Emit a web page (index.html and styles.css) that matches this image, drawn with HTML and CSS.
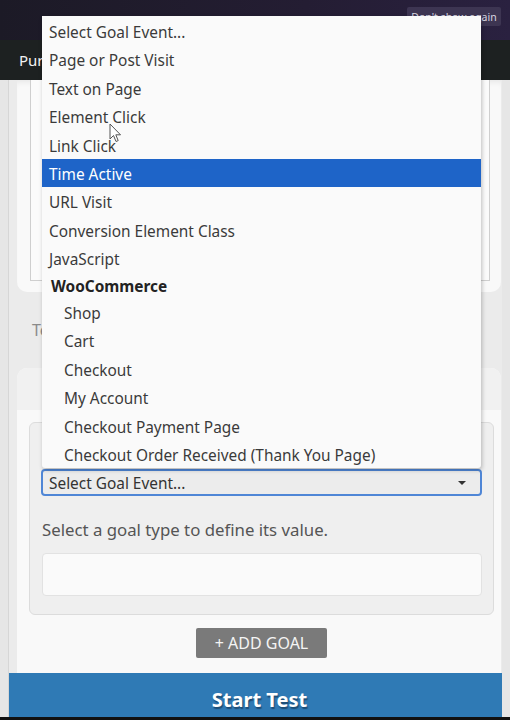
FILE: index.html
```html
<!DOCTYPE html>
<html>
<head>
<meta charset="utf-8">
<link rel="stylesheet" href="styles.css">
</head>
<body>
<div class="topbar"><button class="dismiss">Don't show again</button></div>
<div class="navbar"><span class="navtext">Pur</span></div>
<div class="page">
  <div class="main">
    <div class="card card-top">
      <div class="textbox"></div>
    </div>
    <div class="section-label">Te</div>
    <div class="card card-goals">
      <div class="card-head"></div>
      <div class="card-body">
        <div class="goal-panel">
          <div class="goal-label"></div>
          <div class="select-box"><span>Select Goal Event...</span><span class="caret"></span></div>
          <div class="hint">Select a goal type to define its value.</div>
          <div class="value-box"></div>
        </div>
        <div class="add-row"><button class="add-goal">+ ADD GOAL</button></div>
      </div>
    </div>
  </div>
  <div class="start-bar">Start Test</div>
</div>
<div class="bottom-edge"></div>

<ul class="dropdown">
  <li class="opt">Select Goal Event...</li>
  <li class="opt">Page or Post Visit</li>
  <li class="opt">Text on Page</li>
  <li class="opt">Element Click</li>
  <li class="opt">Link Click</li>
  <li class="opt selected">Time Active</li>
  <li class="opt">URL Visit</li>
  <li class="opt">Conversion Element Class</li>
  <li class="opt">JavaScript</li>
  <li class="group">WooCommerce</li>
  <li class="opt sub">Shop</li>
  <li class="opt sub">Cart</li>
  <li class="opt sub">Checkout</li>
  <li class="opt sub">My Account</li>
  <li class="opt sub">Checkout Payment Page</li>
  <li class="opt sub">Checkout Order Received (Thank You Page)</li>
</ul>

<svg class="cursor" width="13" height="20" viewBox="0 0 13 20">
  <path d="M1 1 L1 16 L4.5 12.5 L7 18.5 L9.2 17.6 L6.8 11.8 L11.5 11.8 Z" fill="#ffffff" stroke="#555" stroke-width="1"/>
</svg>
</body>
</html>
```
FILE: styles.css
```css
html, body {
  margin: 0;
  padding: 0;
}
body {
  width: 510px;
  height: 720px;
  overflow: hidden;
  background: #e6e6e6;
  font-family: "Noto Sans", "Open Sans", sans-serif;
  position: relative;
}
.topbar {
  height: 40px;
  background: linear-gradient(90deg, #1c1a26, #241d33 60%, #2a2140);
  display: flex;
  justify-content: flex-end;
  align-items: flex-start;
  padding: 7px 9px 0 0;
  box-sizing: border-box;
}
.dismiss {
  height: 19px;
  width: 94px;
  border: none;
  border-radius: 2px;
  background: #3d3552;
  color: #d8d6e0;
  font-family: "Noto Sans", sans-serif;
  font-size: 10.5px;
  padding: 0;
}
.navbar {
  height: 40px;
  background: #1d2121;
  display: flex;
  align-items: center;
  padding-left: 19px;
  box-sizing: border-box;
}
.navtext {
  color: #f2f2f2;
  font-size: 15px;
}
.page {
  margin: 0 8px;
  border-left: 1px solid #d6d6d6;
  height: 637px;
  display: flex;
  flex-direction: column;
  box-sizing: border-box;
}
.main {
  flex: 1;
  background: #ebebeb;
  padding: 0 1px 0 8px;
  display: flex;
  flex-direction: column;
}
.card {
  background: #f9f9f9;
}
.card-top {
  height: 212px;
  border-radius: 0 0 10px 10px;
  padding: 0 11px 11px 13px;
  box-sizing: border-box;
  box-shadow: inset 0 6px 6px -4px rgba(0,0,0,0.08);
}
.textbox {
  height: 201px;
  border: 1px solid #cfcfcf;
  border-top: none;
  background: #fbfbfb;
  box-sizing: border-box;
}
.section-label {
  height: 76px;
  display: flex;
  align-items: center;
  padding-left: 15px;
  color: #8a8a8a;
  font-size: 16px;
}
.card-goals {
  flex: 1;
  border-radius: 10px 10px 0 0;
  display: flex;
  flex-direction: column;
}
.card-head {
  height: 42px;
  background: #f1f1f1;
  border-radius: 10px 10px 0 0;
}
.card-body {
  flex: 1;
  padding: 12px 7px 0 12px;
}
.goal-panel {
  background: #efefef;
  border: 1px solid #dcdcdc;
  border-radius: 6px;
  height: 193px;
  box-sizing: border-box;
  padding: 0 11px 0 11px;
}
.goal-label {
  height: 46px;
}
.select-box {
  height: 27px;
  border: 2px solid #4f86d6;
  border-radius: 4px;
  background: #ececec;
  box-sizing: border-box;
  display: flex;
  align-items: center;
  justify-content: space-between;
  padding: 1px 14px 0 6px;
  color: #333;
  font-size: 15.4px;
}
.caret {
  width: 0;
  height: 0;
  border-left: 4px solid transparent;
  border-right: 4px solid transparent;
  border-top: 4px solid #333;
}
.hint {
  height: 57px;
  box-sizing: border-box;
  padding: 9px 0 0 1px;
  display: flex;
  align-items: center;
  color: #555;
  font-size: 16.8px;
}
.value-box {
  height: 43px;
  margin-left: 1px;
  background: #fafafa;
  border: 1px solid #e2e2e2;
  border-radius: 4px;
  box-sizing: border-box;
}
.add-row {
  display: flex;
  justify-content: center;
  padding: 13px 0 0 0;
}
.add-goal {
  width: 131px;
  height: 30px;
  border: none;
  border-radius: 2px;
  background: #7a7a7a;
  color: #f4f4f4;
  font-family: "Noto Sans", sans-serif;
  font-size: 16px;
  padding: 0;
}
.start-bar {
  height: 44px;
  box-sizing: border-box;
  padding: 8px 0 0 8px;
  background: #2f7ab5;
  color: #ffffff;
  font-weight: bold;
  font-size: 20px;
  display: flex;
  align-items: center;
  justify-content: center;
  text-shadow: 1px 2px 1px #1d4d75;
}
.bottom-edge {
  height: 3px;
  background: #111;
}
.dropdown {
  position: absolute;
  left: 42px;
  top: 16px;
  width: 439px;
  margin: 0;
  padding: 1px 0 0 0;
  list-style: none;
  background: #fafafa;
  box-shadow: 1px 2px 4px rgba(0,0,0,0.25);
  border-radius: 0 0 3px 3px;
  font-size: 15.4px;
  color: #3a3a3a;
}
.opt {
  height: 28.4px;
  box-sizing: border-box;
  padding-top: 3px;
  line-height: 25.4px;
  padding-left: 7px;
  white-space: nowrap;
}
.opt.sub {
  padding-left: 22px;
}
.opt.selected {
  background: #1e64c8;
  color: #ffffff;
}
.group {
  height: 25.5px;
  box-sizing: border-box;
  padding-top: 3px;
  line-height: 22.5px;
  padding-left: 9px;
  font-weight: bold;
  color: #222;
}
.cursor {
  position: absolute;
  left: 109px;
  top: 123px;
}
```
